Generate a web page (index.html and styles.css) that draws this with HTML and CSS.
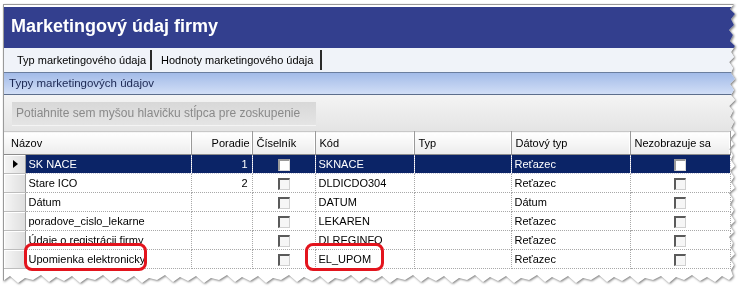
FILE: index.html
```html
<!DOCTYPE html>
<html>
<head>
  <meta charset="UTF-8" />
  <link rel="stylesheet" href="styles.css">
</head>
<body>
  <div class="page">
    <div class="sheet">
      <div class="window">
        <div class="title">Marketingový údaj firmy</div>

        <div class="tabs">
          <div class="tab tab-first">Typ marketingového údaja</div>
          <div class="tab">Hodnoty marketingového údaja</div>
        </div>

        <div class="caption">Typy marketingových údajov</div>

        <div class="group-panel">
          <div class="group-box">Potiahnite sem myšou hlavičku stĺpca pre zoskupenie</div>
        </div>

        <table class="grid">
          <colgroup>
            <col class="c-sel">
            <col class="c-name">
            <col class="c-order">
            <col class="c-list">
            <col class="c-code">
            <col class="c-type">
            <col class="c-dtype">
            <col class="c-hide">
          </colgroup>
          <thead>
            <tr>
              <th colspan="2">Názov</th>
              <th class="num">Poradie</th>
              <th>Číselník</th>
              <th>Kód</th>
              <th>Typ</th>
              <th>Dátový typ</th>
              <th>Nezobrazuje sa</th>
            </tr>
          </thead>
          <tbody>
            <tr class="selected">
              <td class="sel"><span class="arrow"></span></td>
              <td>SK NACE</td>
              <td class="num">1</td>
              <td class="chk"><span class="box"></span></td>
              <td>SKNACE</td>
              <td></td>
              <td>Reťazec</td>
              <td class="chk"><span class="box"></span></td>
            </tr>
            <tr>
              <td class="sel"></td>
              <td>Stare ICO</td>
              <td class="num">2</td>
              <td class="chk"><span class="box"></span></td>
              <td>DLDICDO304</td>
              <td></td>
              <td>Reťazec</td>
              <td class="chk"><span class="box"></span></td>
            </tr>
            <tr>
              <td class="sel"></td>
              <td>Dátum</td>
              <td class="num"></td>
              <td class="chk"><span class="box"></span></td>
              <td>DATUM</td>
              <td></td>
              <td>Dátum</td>
              <td class="chk"><span class="box"></span></td>
            </tr>
            <tr>
              <td class="sel"></td>
              <td>poradove_cislo_lekarne</td>
              <td class="num"></td>
              <td class="chk"><span class="box"></span></td>
              <td>LEKAREN</td>
              <td></td>
              <td>Reťazec</td>
              <td class="chk"><span class="box"></span></td>
            </tr>
            <tr>
              <td class="sel"></td>
              <td>Údaje o registrácii firmy</td>
              <td class="num"></td>
              <td class="chk"><span class="box"></span></td>
              <td>DLREGINFO</td>
              <td></td>
              <td>Reťazec</td>
              <td class="chk"><span class="box"></span></td>
            </tr>
            <tr>
              <td class="sel"></td>
              <td>Upomienka elektronicky</td>
              <td class="num"></td>
              <td class="chk"><span class="box"></span></td>
              <td>EL_UPOM</td>
              <td></td>
              <td>Reťazec</td>
              <td class="chk"><span class="box"></span></td>
            </tr>
          </tbody>
        </table>
      </div>
    </div>

    <!-- red marks drawn over the screenshot -->
    <div class="mark mark-name"></div>
    <div class="mark mark-code"></div>
  </div>
</body>
</html>
```

FILE: styles.css
```css
body {
    margin: 0;
    background: #fff;
    font-family: "Liberation Sans", Arial, sans-serif;
    font-size: 11px;
    color: #000;
}

.page {
    position: relative;
    padding: 4px 0 0 3px;
}

.sheet {
    width: 736px;
    height: 283px;
    filter: drop-shadow(1px 1px 1px rgba(0, 0, 0, 0.5));
}

.window {
    height: 100%;
    box-sizing: border-box;
    background: #fff;
    border-top: 1px solid #9a9a9a;
    border-left: 1px solid #9a9a9a;
    overflow: hidden;
    clip-path: polygon(0 0, 731px 0, 727px 5px, 732px 10px, 728px 15px, 731px 21px, 726px 26px, 730px 31px, 727px 37px, 732px 42px, 728px 48px, 731px 53px, 726px 58px, 730px 64px, 728px 69px, 732px 75px, 727px 80px, 731px 86px, 728px 91px, 732px 96px, 726px 102px, 730px 107px, 727px 113px, 731px 118px, 728px 124px, 732px 129px, 727px 135px, 731px 140px, 726px 145px, 730px 151px, 728px 156px, 732px 162px, 727px 167px, 731px 173px, 728px 178px, 732px 184px, 726px 189px, 730px 195px, 727px 200px, 731px 206px, 728px 211px, 732px 217px, 727px 222px, 731px 228px, 726px 233px, 730px 239px, 728px 244px, 732px 250px, 727px 255px, 731px 261px, 728px 266px, 730px 272px, 726px 276px,
        719px 272px, 712px 278px, 704px 273px, 697px 277px, 689px 271px, 681px 276px, 673px 273px, 666px 279px, 658px 272px, 650px 276px, 642px 274px, 635px 279px, 627px 272px, 619px 277px, 611px 273px, 604px 278px, 596px 271px, 588px 276px, 580px 274px, 573px 279px, 565px 272px, 557px 277px, 549px 273px, 542px 278px, 534px 271px, 526px 276px, 518px 274px, 511px 279px, 503px 272px, 495px 277px, 487px 273px, 480px 278px, 472px 271px, 464px 276px, 456px 274px, 449px 279px, 441px 272px, 433px 277px, 425px 273px, 418px 278px, 410px 271px, 402px 276px, 394px 274px, 387px 279px, 379px 272px, 371px 277px, 363px 273px, 356px 278px, 348px 271px, 340px 276px, 332px 274px, 325px 279px, 317px 272px, 309px 277px, 301px 273px, 294px 278px, 286px 271px, 278px 276px, 270px 274px, 263px 279px, 255px 272px, 247px 277px, 239px 273px, 232px 278px, 224px 271px, 216px 276px, 208px 274px, 201px 279px, 193px 272px, 185px 277px, 177px 273px, 170px 278px, 162px 271px, 154px 276px, 146px 274px, 139px 279px, 131px 272px, 123px 277px, 115px 273px, 108px 278px, 100px 271px, 92px 276px, 84px 274px, 77px 279px, 69px 272px, 61px 277px, 53px 273px, 46px 278px, 38px 271px, 30px 276px, 22px 274px, 15px 279px, 7px 272px, 0 277px);
}

/* title bar */
.title {
    margin-top: 2px;
    height: 41px;
    line-height: 39px;
    padding-left: 7px;
    background: #333f8e;
    color: #fff;
    font-size: 18px;
    font-weight: bold;
    white-space: nowrap;
}

/* tabs */
.tabs {
    display: flex;
    height: 24px;
    background: #f0f3f9;
    border-bottom: 1px solid #6b7e9e;
    font-size: 11px;
}

.tab {
    position: relative;
    line-height: 24px;
    padding: 0 9px 0 9px;
    white-space: nowrap;
}

.tab-first {
    width: 148px;
    box-sizing: border-box;
    padding-left: 13px;
}

.tab::after {
    content: "";
    position: absolute;
    right: 0;
    top: 2px;
    bottom: 2px;
    width: 2px;
    background: #2a2a2a;
}

/* blue caption */
.caption {
    height: 21px;
    line-height: 21px;
    padding-left: 5px;
    background: linear-gradient(#a3bbe8, #d1def6);
    border-bottom: 1px solid #5d6e8c;
    color: #1b2752;
    font-size: 11.5px;
    white-space: nowrap;
}

/* grouping panel */
.group-panel {
    height: 36px;
    box-sizing: border-box;
    padding: 7px 0 0 8px;
    background: linear-gradient(#f4f4f4, #e4e4e4);
}

.group-box {
    width: 304px;
    height: 24px;
    box-sizing: border-box;
    line-height: 23px;
    padding-left: 4px;
    background: linear-gradient(#d8d8d8, #e4e4e4);
    border-bottom: 1px solid #f4f4f4;
    color: #8a8a8a;
    font-size: 12px;
    white-space: nowrap;
}

/* grid */
.grid {
    width: 726px;
    border-collapse: collapse;
    table-layout: fixed;
}

.c-sel { width: 21px; }
.c-name { width: 166px; }
.c-order { width: 61px; }
.c-list { width: 63px; }
.c-code { width: 99px; }
.c-type { width: 97px; }
.c-dtype { width: 119px; }
.c-hide { width: 100px; }

.grid th {
    height: 22px;
    padding: 0 4px;
    text-align: left;
    font-weight: normal;
    white-space: nowrap;
    background: linear-gradient(#ffffff, #ececec);
    border-top: 1px solid #c8c8c8;
    border-bottom: 1px solid #8c8c8c;
    border-right: 1px solid #9a9a9a;
    box-shadow: inset -1px 0 0 #fff;
}

.grid th:first-child {
    padding-left: 7px;
}

.grid th.num {
    text-align: right;
    padding-right: 2px;
}

.grid td {
    height: 18px;
    padding: 0 3px;
    white-space: nowrap;
    overflow: hidden;
    border-right: 1px dotted #a8a8a8;
    border-bottom: 1px dotted #a8a8a8;
}

.grid td.num {
    text-align: right;
    padding-right: 4px;
}

.grid td.chk {
    text-align: center;
    padding: 0;
}

.grid td.sel {
    padding: 0;
    background: linear-gradient(90deg, #f6f6f6, #dedede);
    border-right: 1px solid #9c9c9c;
    border-bottom: 1px solid #bdbdbd;
    box-shadow: inset 1px 1px 0 #fff;
}

.arrow {
    display: block;
    margin-left: 9px;
    width: 0;
    height: 0;
    border-top: 4px solid transparent;
    border-bottom: 4px solid transparent;
    border-left: 5px solid #000;
}

.box {
    display: inline-block;
    vertical-align: middle;
    width: 9px;
    height: 9px;
    background: #f6f6f6;
    border-top: 2px solid #5a5a5a;
    border-left: 2px solid #5a5a5a;
    border-right: 1px solid #d0d0d0;
    border-bottom: 1px solid #d0d0d0;
}

.selected td:not(.sel) {
    background: #0b2467;
    color: #fff;
    border-bottom-color: #c8c8d8;
    border-right-color: #c8c8d8;
}

.selected .box {
    background: #fff;
    border-color: #9a9a9a #d8d8d8 #d8d8d8 #9a9a9a;
}

/* annotation marks */
.mark {
    position: absolute;
    top: 243px;
    height: 28px;
    box-sizing: border-box;
    border: 3px solid #e3141d;
    border-radius: 8px;
}

.mark-name {
    left: 24px;
    width: 123px;
}

.mark-code {
    left: 305px;
    width: 79px;
}
```
